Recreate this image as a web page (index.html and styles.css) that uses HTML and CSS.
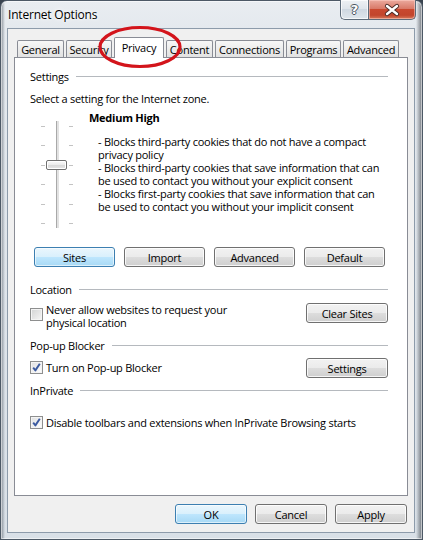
FILE: index.html
```html
<!DOCTYPE html>
<html lang="en">
<head>
<meta charset="utf-8">
<title>Internet Options</title>
<link rel="stylesheet" href="styles.css">
</head>
<body>
<div class="window">
  <div class="titlebar">
    <span class="title">Internet Options</span>
    <div class="caption-buttons">
      <span class="cap-btn help">?</span>
      <span class="cap-btn close">
        <svg width="46" height="18" viewBox="0 0 46 18">
          <path d="M18 5 L28 13 M28 5 L18 13" stroke="#4a2a26" stroke-width="4.2" stroke-linecap="round" fill="none"/>
          <path d="M18 5 L28 13 M28 5 L18 13" stroke="#ffffff" stroke-width="2.4" stroke-linecap="round" fill="none"/>
        </svg>
      </span>
    </div>
  </div>

  <div class="client">
    <div class="tabs">
      <span class="tab">General</span>
      <span class="tab">Security</span>
      <span class="tab selected">Privacy</span>
      <span class="tab">Content</span>
      <span class="tab">Connections</span>
      <span class="tab">Programs</span>
      <span class="tab">Advanced</span>
    </div>

    <div class="panel">
      <div class="group-header"><span>Settings</span><i class="rule"></i></div>
      <p class="intro">Select a setting for the Internet zone.</p>

      <div class="privacy">
        <div class="slider">
          <div class="ticks"><i></i><i></i><i></i><i></i><i></i><i></i></div>
          <div class="track-col"><div class="track"></div></div>
          <div class="ticks"><i></i><i></i><i></i><i></i><i></i><i></i></div>
          <div class="thumb"></div>
        </div>
        <div class="privacy-text">
          <div class="level">Medium High</div>
          <p class="desc">- Blocks third-party cookies that do not have a compact<br>privacy policy<br>- Blocks third-party cookies that save information that can<br>be used to contact you without your explicit consent<br>- Blocks first-party cookies that save information that can<br>be used to contact you without your implicit consent</p>
        </div>
      </div>

      <div class="btn-row">
        <span class="btn focused">Sites</span>
        <span class="btn">Import</span>
        <span class="btn">Advanced</span>
        <span class="btn">Default</span>
      </div>

      <div class="group-header location-header"><span>Location</span><i class="rule"></i></div>
      <div class="option-row location-row">
        <span class="checkbox"></span>
        <span class="option-label">Never allow websites to request your<br>physical location</span>
        <span class="btn side-btn">Clear Sites</span>
      </div>

      <div class="group-header popup-header"><span>Pop-up Blocker</span><i class="rule"></i></div>
      <div class="option-row popup-row">
        <span class="checkbox checked"><svg width="11" height="11" viewBox="0 0 11 11"><path d="M2.2 5.6 L4.4 8.4 L8.8 1.8" stroke="#3b5aa0" stroke-width="1.9" fill="none" stroke-linejoin="round"/></svg></span>
        <span class="option-label">Turn on Pop-up Blocker</span>
        <span class="btn side-btn">Settings</span>
      </div>

      <div class="group-header inprivate-header"><span>InPrivate</span><i class="rule"></i></div>
      <div class="option-row inprivate-row">
        <span class="checkbox checked"><svg width="11" height="11" viewBox="0 0 11 11"><path d="M2.2 5.6 L4.4 8.4 L8.8 1.8" stroke="#3b5aa0" stroke-width="1.9" fill="none" stroke-linejoin="round"/></svg></span>
        <span class="option-label">Disable toolbars and extensions when InPrivate Browsing starts</span>
      </div>
    </div>

    <div class="dialog-buttons">
      <span class="btn dlg focused">OK</span>
      <span class="btn dlg">Cancel</span>
      <span class="btn dlg">Apply</span>
    </div>
  </div>

  <svg class="annotation" width="86" height="46" viewBox="0 0 86 46">
    <ellipse cx="43" cy="23" rx="40" ry="19.5" fill="none" stroke="#d3141b" stroke-width="3.2"/>
  </svg>
</div>
</body>
</html>
```

FILE: styles.css
```css
html, body {
  margin: 0;
  padding: 0;
}

body {
  width: 423px;
  height: 540px;
  overflow: hidden;
  background: #3a4450;
  font-family: "Open Sans", "Noto Sans", sans-serif;
  font-size: 11px;
  letter-spacing: -0.25px;
  color: #000;
}

.window {
  position: relative;
  box-sizing: border-box;
  width: 423px;
  height: 540px;
  display: flex;
  flex-direction: column;
  padding: 0 7px 6px 6px;
  border: 1px solid #4d5966;
  border-radius: 7px 7px 0 0;
  background:
    linear-gradient(to right, rgba(60,70,82,0.55) 0, rgba(60,70,82,0) 4px, rgba(60,70,82,0) calc(100% - 6px), rgba(40,46,54,0.6) 100%),
    linear-gradient(to bottom, #e9edf1 0, #e4e9ee 28px, #d9e0e7 100%);
  box-shadow: inset 0 0 0 1px rgba(255,255,255,0.55);
}

/* ---------- title bar ---------- */
.titlebar {
  height: 27px;
  display: flex;
  align-items: flex-start;
}

.title {
  padding: 6px 0 0 1px;
  line-height: 16px;
  font-size: 12px;
  letter-spacing: -0.2px;
  color: #000;
  text-shadow: 0 0 6px #ffffff, 0 0 3px #ffffff;
}

.caption-buttons {
  margin: -1px -1px 0 auto;
  display: flex;
  height: 20px;
}

.cap-btn {
  box-sizing: border-box;
  height: 20px;
  display: flex;
  align-items: center;
  justify-content: center;
  border: 1px solid #5d6b79;
  border-top: none;
}

.help {
  width: 28px;
  border-right: none;
  border-radius: 0 0 0 5px;
  background: linear-gradient(#eef1f4 0, #dfe5eb 45%, #cfd8e1 50%, #dfe6ec 100%);
  box-shadow: inset 0 0 0 1px rgba(255,255,255,0.7);
  font-family: "DejaVu Sans", sans-serif;
  font-weight: bold;
  font-size: 13px;
  letter-spacing: 0;
  color: #ffffff;
  text-shadow: 1px 0 0 #4c5560, -1px 0 0 #4c5560, 0 1px 0 #4c5560, 0 -1px 0 #4c5560;
  line-height: 18px;
}

.close {
  width: 48px;
  border-radius: 0 0 5px 0;
  background: linear-gradient(#ebaa9e 0, #d97a69 45%, #c9482f 50%, #c2452c 80%, #d77a5c 100%);
  box-shadow: inset 0 0 0 1px rgba(255,210,200,0.55);
}

/* ---------- client area ---------- */
.client {
  flex: 1;
  display: flex;
  flex-direction: column;
  padding: 0 6px;
  background: #f0f0f0;
  border: 1px solid #8d9baa;
}

.tabs {
  display: grid;
  grid-template-columns: 47px 46px 50px 47px 69px 55px 56px;
  column-gap: 2px;
  align-items: end;
  padding: 8px 0 0 3px;
}

.tab {
  box-sizing: border-box;
  height: 17px;
  display: flex;
  align-items: center;
  justify-content: center;
  padding-top: 1px;
  line-height: 13px;
  border: 1px solid #898c95;
  border-bottom: none;
  border-radius: 2px 2px 0 0;
  background: linear-gradient(#f7f7f7 0, #ececec 50%, #e2e2e2 100%);
  white-space: nowrap;
}

.tab.selected {
  position: relative;
  z-index: 1;
  height: 21px;
  margin-bottom: -1px;
  padding-top: 0;
  padding-bottom: 2px;
  background: #ffffff;
}

.panel {
  flex: 1;
  display: flex;
  flex-direction: column;
  padding: 12px 19px 0 15px;
  background: #ffffff;
  border: 1px solid #898c95;
  line-height: 13px;
}

.group-header {
  display: flex;
  align-items: center;
  gap: 7px;
  height: 13px;
  white-space: nowrap;
}

.rule {
  flex: 1;
  height: 1px;
  background: #b5b9be;
}

.intro {
  margin: 9px 0 0;
}

.privacy {
  display: flex;
  margin-top: 6px;
}

.slider {
  position: relative;
  flex: none;
  display: grid;
  grid-template-columns: 4px 1fr 4px;
  width: 32px;
  height: 107px;
  margin: 10px 0 0 11px;
}

.ticks {
  display: flex;
  flex-direction: column;
  justify-content: space-between;
  padding: 5px 0 4px;
}

.ticks i {
  display: block;
  height: 1px;
  background: #c3c3c3;
}

.track-col {
  display: flex;
  justify-content: center;
}

.track {
  width: 2px;
  border-left: 1px solid #a9a9a9;
  background: #e2e2e2;
}

.thumb {
  position: absolute;
  left: 5px;
  top: 39px;
  box-sizing: border-box;
  width: 21px;
  height: 10px;
  border: 1px solid #707070;
  border-radius: 2px;
  background: linear-gradient(#fbfbfb 0, #ececec 45%, #dadada 55%, #e6e6e6 100%);
  box-shadow: inset 0 0 0 1px #ffffff;
}

.privacy-text {
  flex: none;
  margin-left: 16px;
}

.level {
  font-weight: bold;
}

.desc {
  margin: 11px 0 0 9px;
  white-space: nowrap;
}

.btn-row {
  display: flex;
  gap: 9px;
  margin: 19px 0 0 4px;
}

.btn {
  box-sizing: border-box;
  height: 20px;
  display: flex;
  align-items: center;
  justify-content: center;
  border: 1px solid #707070;
  border-radius: 3px;
  background: linear-gradient(#f2f2f2 0, #ebebeb 50%, #dddddd 51%, #cfcfcf 100%);
  box-shadow: inset 0 0 0 1px rgba(255,255,255,0.8);
  white-space: nowrap;
  line-height: 13px;
}

.btn-row .btn {
  width: 81px;
}

.btn.focused {
  border-color: #3c7fb1;
  background: linear-gradient(#eaf6fd 0, #d9f0fc 50%, #bee6fd 51%, #a7d9f5 100%);
  box-shadow: inset 0 0 0 1px rgba(255,255,255,0.6);
}

.location-header {
  margin-top: 16px;
}

.option-row {
  display: flex;
  align-items: flex-start;
}

.location-row {
  margin-top: 7px;
}

.checkbox {
  box-sizing: border-box;
  flex: none;
  width: 13px;
  height: 13px;
  display: flex;
  align-items: center;
  justify-content: center;
  border: 1px solid #8e8f8f;
  background: linear-gradient(135deg, #d2d3d4 0, #e8e8e8 60%, #f6f6f6 100%);
  box-shadow: inset 0 0 0 1px #f4f4f4;
}

.checkbox.checked {
  background: linear-gradient(135deg, #dedfe0 0, #f2f2f2 60%, #ffffff 100%);
}

.location-row .checkbox {
  margin-top: 5px;
}

.option-label {
  flex: 1;
  margin-left: 3px;
  white-space: nowrap;
}

.side-btn {
  width: 82px;
}

.popup-header {
  margin-top: 10px;
}

.popup-row {
  margin-top: 6px;
}

.popup-row .checkbox,
.popup-row .option-label {
  margin-top: 3px;
}

.inprivate-header {
  margin-top: 6px;
}

.inprivate-row {
  margin-top: 19px;
}

/* ---------- dialog buttons ---------- */
.dialog-buttons {
  display: flex;
  justify-content: flex-end;
  gap: 8px;
  margin: 8px 0 8px;
  padding-right: 1px;
}

.btn.dlg {
  width: 72px;
}

/* ---------- red annotation ring ---------- */
.annotation {
  position: absolute;
  left: 96px;
  top: 23px;
  z-index: 5;
  pointer-events: none;
}
```
